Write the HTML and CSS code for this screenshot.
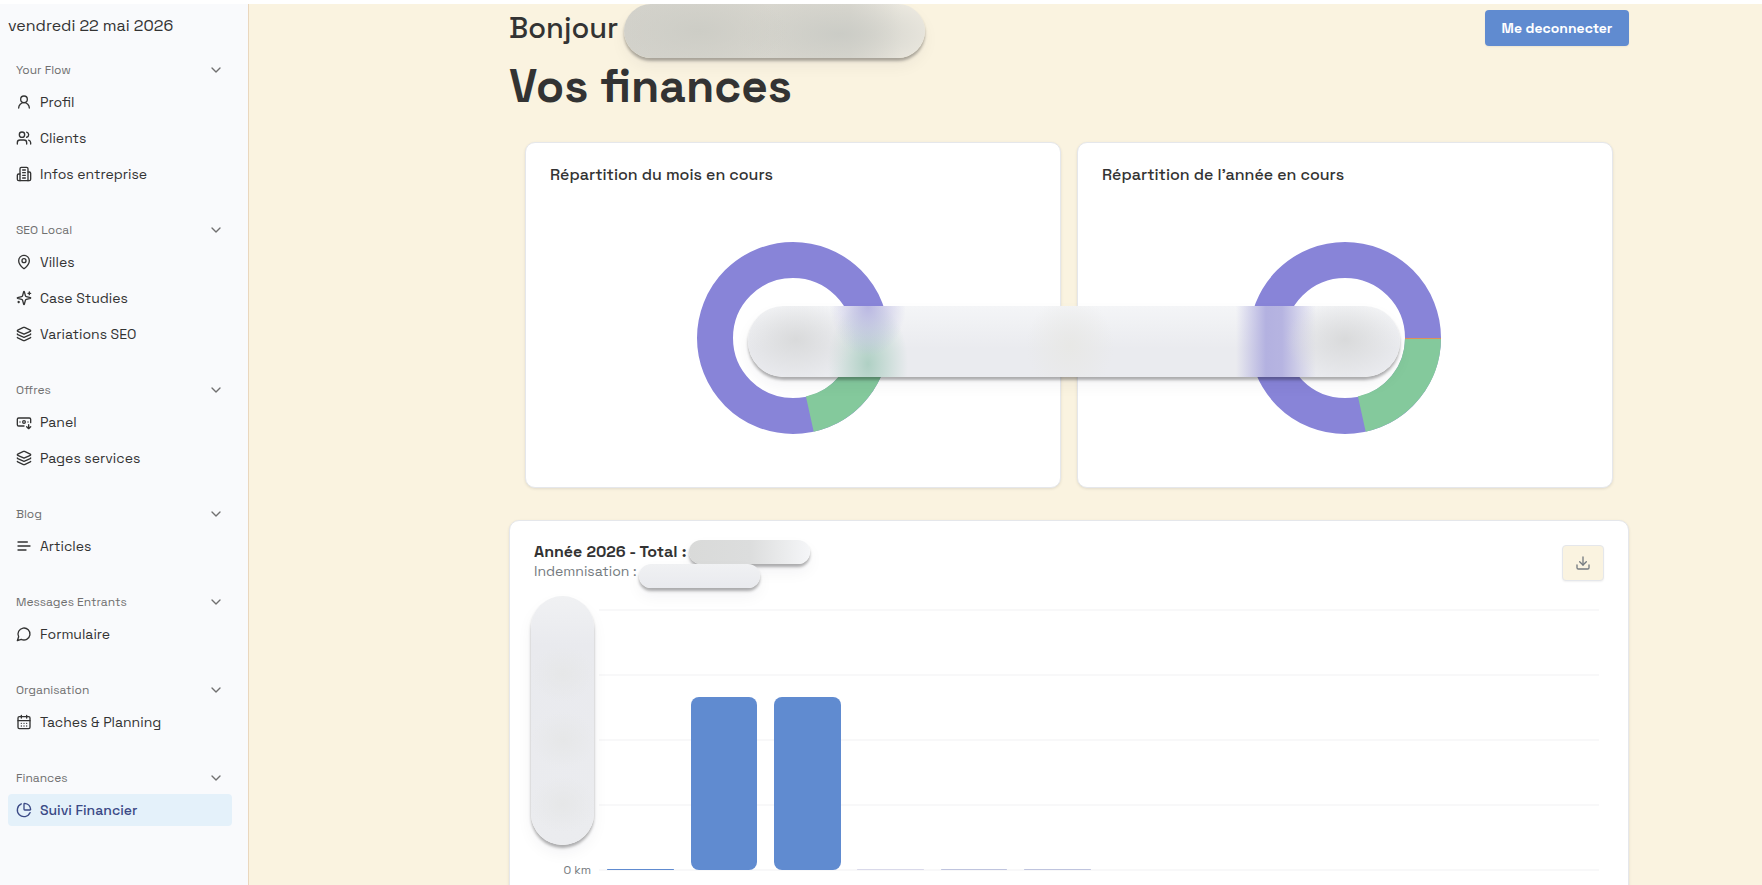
FILE: index.html
```html
<!DOCTYPE html>
<html lang="fr">
<head>
  <meta charset="UTF-8">
  <meta name="viewport" content="width=device-width, initial-scale=1.0">
  <title>Vos finances</title>
  <link rel="stylesheet" href="styles.css">
</head>
<body>
  <svg class="sprite" aria-hidden="true">
    <symbol id="chevron" viewBox="0 0 24 24"><path d="m6 9 6 6 6-6"/></symbol>
    <symbol id="user" viewBox="0 0 24 24"><circle cx="12" cy="8" r="5"/><path d="M20 21a8 8 0 0 0-16 0"/></symbol>
    <symbol id="users" viewBox="0 0 24 24"><path d="M16 21v-2a4 4 0 0 0-4-4H6a4 4 0 0 0-4 4v2"/><circle cx="9" cy="7" r="4"/><path d="M22 21v-2a4 4 0 0 0-3-3.87M16 3.13a4 4 0 0 1 0 7.75"/></symbol>
    <symbol id="building" viewBox="0 0 24 24"><path d="M6 22V4a2 2 0 0 1 2-2h8a2 2 0 0 1 2 2v18Z"/><path d="M6 12H4a2 2 0 0 0-2 2v6a2 2 0 0 0 2 2h2"/><path d="M18 9h2a2 2 0 0 1 2 2v9a2 2 0 0 1-2 2h-2"/><path d="M10 6h4M10 10h4M10 14h4M10 18h4"/></symbol>
    <symbol id="pin" viewBox="0 0 24 24"><path d="M20 10c0 4.993-5.539 10.193-7.399 11.799a1 1 0 0 1-1.202 0C9.539 20.193 4 14.993 4 10a8 8 0 0 1 16 0"/><circle cx="12" cy="10" r="3"/></symbol>
    <symbol id="sparkles" viewBox="0 0 24 24"><path d="M9.937 15.5A2 2 0 0 0 8.5 14.063l-6.135-1.582a.5.5 0 0 1 0-.962L8.5 9.936A2 2 0 0 0 9.937 8.5l1.582-6.135a.5.5 0 0 1 .963 0L14.063 8.5A2 2 0 0 0 15.5 9.937l6.135 1.581a.5.5 0 0 1 0 .964L15.5 14.063a2 2 0 0 0-1.437 1.437l-1.582 6.135a.5.5 0 0 1-.963 0z"/><path d="M20 3v4M22 5h-4M4 17v2M5 18H3"/></symbol>
    <symbol id="layers" viewBox="0 0 24 24"><path d="M12.83 2.18a2 2 0 0 0-1.66 0L2.6 6.08a1 1 0 0 0 0 1.83l8.58 3.91a2 2 0 0 0 1.66 0l8.58-3.9a1 1 0 0 0 0-1.83z"/><path d="M2 12a1 1 0 0 0 .58.91l8.6 3.91a2 2 0 0 0 1.65 0l8.58-3.9A1 1 0 0 0 22 12"/><path d="M2 17a1 1 0 0 0 .58.91l8.6 3.91a2 2 0 0 0 1.65 0l8.58-3.9A1 1 0 0 0 22 17"/></symbol>
    <symbol id="banknote" viewBox="0 0 24 24"><path d="M12 18H4a2 2 0 0 1-2-2V8a2 2 0 0 1 2-2h16a2 2 0 0 1 2 2v5"/><path d="m16 19 3 3 3-3M19 16v6M18 12h.01M6 12h.01"/><circle cx="12" cy="12" r="2"/></symbol>
    <symbol id="lines" viewBox="0 0 24 24"><path d="M17 6H3M21 12H3M15 18H3"/></symbol>
    <symbol id="message" viewBox="0 0 24 24"><path d="M7.9 20A9 9 0 1 0 4 16.1L2 22Z"/></symbol>
    <symbol id="calendar" viewBox="0 0 24 24"><path d="M8 2v4M16 2v4M3 10h18"/><rect x="3" y="4" width="18" height="18" rx="2"/><path d="M8 14h.01M12 14h.01M16 14h.01M8 18h.01M12 18h.01M16 18h.01"/></symbol>
    <symbol id="pie" viewBox="0 0 24 24"><path d="M21 12c.552 0 1.005-.449.95-.998a10 10 0 0 0-8.953-8.951c-.55-.055-.998.398-.998.95v8a1 1 0 0 0 1 1z"/><path d="M21.21 15.89A10 10 0 1 1 8 2.83"/></symbol>
    <symbol id="download" viewBox="0 0 24 24"><path d="M12 15V3M21 15v4a2 2 0 0 1-2 2H5a2 2 0 0 1-2-2v-4"/><path d="m7 10 5 5 5-5"/></symbol>
  </svg>

  <div class="app">
    <aside class="sidebar">
      <p class="date">vendredi 22 mai 2026</p>
      <nav class="menu">
        <section class="group">
          <button class="group-title" type="button">Your Flow <svg class="icon"><use href="#chevron"/></svg></button>
          <a class="item" href="#"><svg class="icon"><use href="#user"/></svg>Profil</a>
          <a class="item" href="#"><svg class="icon"><use href="#users"/></svg>Clients</a>
          <a class="item" href="#"><svg class="icon"><use href="#building"/></svg>Infos entreprise</a>
        </section>
        <section class="group">
          <button class="group-title" type="button">SEO Local <svg class="icon"><use href="#chevron"/></svg></button>
          <a class="item" href="#"><svg class="icon"><use href="#pin"/></svg>Villes</a>
          <a class="item" href="#"><svg class="icon"><use href="#sparkles"/></svg>Case Studies</a>
          <a class="item" href="#"><svg class="icon"><use href="#layers"/></svg>Variations SEO</a>
        </section>
        <section class="group">
          <button class="group-title" type="button">Offres <svg class="icon"><use href="#chevron"/></svg></button>
          <a class="item" href="#"><svg class="icon"><use href="#banknote"/></svg>Panel</a>
          <a class="item" href="#"><svg class="icon"><use href="#layers"/></svg>Pages services</a>
        </section>
        <section class="group">
          <button class="group-title" type="button">Blog <svg class="icon"><use href="#chevron"/></svg></button>
          <a class="item" href="#"><svg class="icon"><use href="#lines"/></svg>Articles</a>
        </section>
        <section class="group">
          <button class="group-title" type="button">Messages Entrants <svg class="icon"><use href="#chevron"/></svg></button>
          <a class="item" href="#"><svg class="icon"><use href="#message"/></svg>Formulaire</a>
        </section>
        <section class="group">
          <button class="group-title" type="button">Organisation <svg class="icon"><use href="#chevron"/></svg></button>
          <a class="item" href="#"><svg class="icon"><use href="#calendar"/></svg>Taches &amp; Planning</a>
        </section>
        <section class="group">
          <button class="group-title" type="button">Finances <svg class="icon"><use href="#chevron"/></svg></button>
          <a class="item active" href="#"><svg class="icon"><use href="#pie"/></svg>Suivi Financier</a>
        </section>
      </nav>
    </aside>

    <main class="main">
      <div class="content">
        <header class="header">
          <p class="hello">Bonjour</p>
          <span class="mask mask-name"></span>
          <button class="logout" type="button">Me deconnecter</button>
        </header>
        <h1>Vos finances</h1>

        <div class="pies">
          <section class="card pie-card">
            <h2>Répartition du mois en cours</h2>
            <svg class="donut" viewBox="0 0 192 192" role="img" aria-label="Répartition du mois">
              <circle class="ring" cx="96" cy="96" r="78"/>
              <circle class="ring ring-green" cx="96" cy="96" r="78" pathLength="360" stroke-dasharray="77.5 282.5"/>
            </svg>
          </section>
          <section class="card pie-card">
            <h2>Répartition de l’année en cours</h2>
            <svg class="donut" viewBox="0 0 192 192" role="img" aria-label="Répartition de l’année">
              <circle class="ring" cx="96" cy="96" r="78"/>
              <circle class="ring ring-green" cx="96" cy="96" r="78" pathLength="360" stroke-dasharray="77.5 282.5"/>
              <path class="ring-orange" d="M156 96.5H192"/>
            </svg>
          </section>
          <span class="mask mask-pies"></span>
        </div>

        <section class="card year">
          <header class="year-head">
            <div>
              <h2>Année 2026 - Total :</h2>
              <p class="sub">Indemnisation :</p>
            </div>
            <button class="download" type="button" aria-label="Télécharger"><svg class="icon"><use href="#download"/></svg></button>
          </header>
          <span class="mask mask-total"></span>
          <span class="mask mask-sub"></span>
          <div class="chart">
            <div class="axis"><span class="mask mask-axis"></span><span>0 km</span></div>
            <div class="plot">
              <div class="bar" style="height: 1px"></div>
              <div class="bar" style="height: 173px"></div>
              <div class="bar" style="height: 173px"></div>
              <div class="bar faint" style="height: 1px"></div>
              <div class="bar mid" style="height: 1px"></div>
              <div class="bar mid" style="height: 1px"></div>
            </div>
          </div>
        </section>
      </div>
    </main>
  </div>
</body>
</html>
```

FILE: styles.css
```css
* { box-sizing: border-box; margin: 0; }

body {
  font-family: 'Space Grotesk', Inter, 'Liberation Sans', sans-serif;
  font-size: 14px;
  color: #333;
  background: #fff;
  overflow: hidden;
}
button { font: inherit; cursor: pointer; }
a { color: inherit; text-decoration: none; }

.sprite { display: none; }
.icon {
  width: 16px;
  height: 16px;
  flex: none;
  fill: none;
  stroke: currentColor;
  stroke-width: 2;
  stroke-linecap: round;
  stroke-linejoin: round;
}

.app {
  display: flex;
  height: 100vh;
  padding-top: 4px;
}

/* sidebar */
.sidebar {
  width: 249px;
  flex: none;
  padding: 10px 16px 0 8px;
  background: #f9fafc;
  border-right: 1px solid #ead7bd;
}
.date {
  font-size: 16px;
  line-height: 24px;
  margin-bottom: 16px;
}
.menu {
  display: flex;
  flex-direction: column;
  gap: 24px;
}
.group {
  display: flex;
  flex-direction: column;
  gap: 4px;
}
.group-title {
  display: flex;
  align-items: center;
  justify-content: space-between;
  height: 32px;
  margin-bottom: -4px;
  padding: 0 8px;
  border: 0;
  background: none;
  font-size: 12px;
  color: #707070;
}
.item {
  display: flex;
  align-items: center;
  gap: 8px;
  height: 32px;
  padding: 0 8px;
  border-radius: 4px;
}
.item.active {
  background: #e4f1fa;
  color: #3b4a86;
  font-weight: 500;
}

/* main column */
.main {
  flex: 1;
  min-width: 0;
  padding-left: 127px;
  background: #faf3e0;
  overflow: hidden;
}
.content {
  max-width: 1120px;
  margin: 0 auto;
}
.header {
  position: relative;
  display: flex;
  align-items: center;
  justify-content: space-between;
  padding-top: 6px;
}
.hello {
  font-size: 29px;
  font-weight: 500;
  line-height: 36px;
}
.logout {
  min-width: 144px;
  height: 36px;
  padding: 0 16px;
  border: 0;
  border-radius: 4px;
  background: #608bd0;
  color: #fff;
  font-weight: 600;
  box-shadow: 0 1px 2px rgba(0, 0, 0, .06);
}
h1 {
  font-size: 46px;
  font-weight: 700;
  line-height: 48px;
  margin-top: 16px;
}
h2 {
  font-size: 16px;
  font-weight: 500;
  line-height: 20px;
}

.card {
  background: #fff;
  border: 1px solid #e5e7eb;
  border-radius: 10px;
  box-shadow: 0 1px 3px rgba(0, 0, 0, .1);
}
.pies {
  position: relative;
  display: grid;
  grid-template-columns: 1fr 1fr;
  gap: 16px;
  padding: 32px 16px;
}
.pie-card {
  padding: 22px 24px 53px;
}
.donut {
  display: block;
  width: 192px;
  height: 192px;
  margin: 57px auto 0;
}
.ring {
  fill: none;
  stroke: #8884d8;
  stroke-width: 36;
}
.ring-green { stroke: #84c99c; }
.ring-orange { stroke: #e0905a; stroke-width: 1; }

/* year chart */
.year {
  position: relative;
  padding: 20px 24px 120px;
}
.year-head {
  display: flex;
  justify-content: space-between;
  align-items: flex-start;
}
.year-head h2 {
  font-weight: 600;
  line-height: 22px;
}
.sub {
  color: #757b80;
  line-height: 16px;
}
.download {
  display: flex;
  align-items: center;
  justify-content: center;
  width: 42px;
  height: 36px;
  margin-top: 4px;
  border: 1px solid #e5e7eb;
  border-radius: 4px;
  background: #faf3e0;
  color: #757b80;
  box-shadow: 0 1px 2px rgba(0, 0, 0, .06);
}
.chart {
  display: flex;
  margin-top: 28px;
  padding-right: 5px;
}
.axis {
  position: relative;
  display: flex;
  align-items: flex-end;
  justify-content: flex-end;
  width: 65px;
  height: 268px;
  padding-right: 8px;
  font-size: 12px;
  line-height: 14px;
  color: #757b80;
}
.plot {
  flex: 1;
  display: grid;
  grid-template-columns: repeat(12, 1fr);
  align-items: end;
  justify-items: center;
  height: 262px;
  padding-bottom: 1px;
  background: repeating-linear-gradient(#f8f8f9 0 2px, transparent 2px 65px);
}
.bar {
  width: 80%;
  background: #608bd0;
  border-radius: 8px;
}
.bar.faint { background: #d9d9ea; }
.bar.mid { background: #bfc4de; }

/* frosted covers over private values */
.mask {
  position: absolute;
  border-radius: 36px;
  background: linear-gradient(#f0f1f3, #e9eaee);
  box-shadow: 0 3px 3px rgba(0, 0, 0, .3), 0 8px 16px rgba(0, 0, 50, .05);
}
.mask-name {
  left: 115px;
  top: 0;
  width: 301px;
  height: 54px;
  background:
    radial-gradient(ellipse 90px 40px at 75px 27px, #cdcdc6, transparent),
    radial-gradient(ellipse 100px 40px at 215px 30px, #cbccc6, transparent),
    linear-gradient(90deg, #d3d2cb, #dad8d0 75%, #ebe8df 92%);
}
.mask-pies {
  left: calc(50% - 321px);
  top: 196px;
  width: 652px;
  height: 71px;
  background:
    radial-gradient(ellipse 60px 42px at 48px 34px, #d9dadb, transparent),
    radial-gradient(ellipse 60px 42px at 597px 34px, #d9dadb, transparent),
    radial-gradient(ellipse 38px 50px at 120px 0, #b9b7e2, transparent),
    radial-gradient(ellipse 40px 64px at 120px 58px, #afd0c4, transparent),
    linear-gradient(90deg, transparent 488px, #b3b1e0 518px, #b6b4e1 534px, transparent 568px),
    radial-gradient(ellipse 44px 50px at 322px 40px, #e8e8e6, transparent),
    linear-gradient(#f4f5f7, #eaebef 60%);
}
.mask-total {
  left: 179px;
  top: 19px;
  width: 121px;
  height: 24px;
  background: linear-gradient(90deg, #d9dad9, #dcdddd 50%, #f5f6f8);
}
.mask-sub {
  left: 129px;
  top: 43px;
  width: 121px;
  height: 24px;
}
.mask-axis {
  left: -3px;
  top: -13px;
  width: 63px;
  height: 249px;
  background:
    radial-gradient(ellipse 32px 28px at 32px 78px, #e6e7e8, transparent),
    radial-gradient(ellipse 32px 28px at 32px 144px, #e6e7e8, transparent),
    radial-gradient(ellipse 32px 28px at 32px 208px, #e6e7e8, transparent),
    linear-gradient(#f0f1f3, #e9eaee 20%, #ebecef);
}
```
